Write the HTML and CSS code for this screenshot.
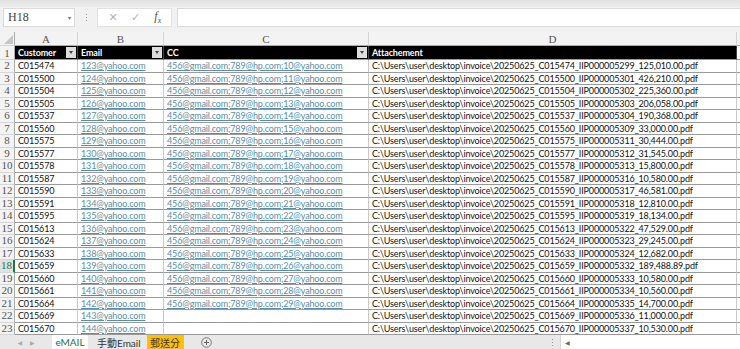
FILE: index.html
```html
<!DOCTYPE html>
<html lang="en">
<head>
    <meta charset="UTF-8">
    <meta name="viewport" content="width=device-width, initial-scale=1.0">
    <title>Invoice mailing list</title>
    <link rel="stylesheet" href="styles.css">
</head>
<body>
    <div class="top-edge"></div>

    <div class="formula-bar">
        <div class="name-box">
            <span>H18</span>
            <span class="caret">&#9662;</span>
        </div>
        <div class="grip"><i></i><i></i><i></i></div>
        <div class="fx-box">
            <span class="fx-btn">&#10005;</span>
            <span class="fx-btn">&#10003;</span>
            <span class="fx-btn fx">f<sub>x</sub></span>
        </div>
        <div class="formula-input"></div>
    </div>

    <div class="sheet">
        <div class="row col-heads">
            <div class="corner"><svg width="9" height="9" viewBox="0 0 9 9"><polygon points="9,0 9,9 0,9" fill="#c6c6c6"/></svg></div>
            <div class="c a">A</div>
            <div class="c b">B</div>
            <div class="c cc">C</div>
            <div class="c d">D</div>
            <div class="c e"></div>
        </div>

        <div class="row head">
            <div class="rn">1</div>
            <div class="c a">Customer<span class="filter"></span></div>
            <div class="c b">Email<span class="filter"></span></div>
            <div class="c cc">CC<span class="filter"></span></div>
            <div class="c d">Attachement</div>
            <div class="c e"></div>
        </div>

        <div class="row"><div class="rn">2</div><div class="c a">C015474</div><div class="c b"><a>123@yahoo.com</a></div><div class="c cc"><a>456@gmail.com;789@hp.com;10@yahoo.com</a></div><div class="c d">C:\Users\user\desktop\invoice\20250625_C015474_IIP000005299_125,010.00.pdf</div><div class="c e"></div></div>
        <div class="row"><div class="rn">3</div><div class="c a">C015500</div><div class="c b"><a>124@yahoo.com</a></div><div class="c cc"><a>456@gmail.com;789@hp.com;11@yahoo.com</a></div><div class="c d">C:\Users\user\desktop\invoice\20250625_C015500_IIP000005301_426,210.00.pdf</div><div class="c e"></div></div>
        <div class="row"><div class="rn">4</div><div class="c a">C015504</div><div class="c b"><a>125@yahoo.com</a></div><div class="c cc"><a>456@gmail.com;789@hp.com;12@yahoo.com</a></div><div class="c d">C:\Users\user\desktop\invoice\20250625_C015504_IIP000005302_225,360.00.pdf</div><div class="c e"></div></div>
        <div class="row"><div class="rn">5</div><div class="c a">C015505</div><div class="c b"><a>126@yahoo.com</a></div><div class="c cc"><a>456@gmail.com;789@hp.com;13@yahoo.com</a></div><div class="c d">C:\Users\user\desktop\invoice\20250625_C015505_IIP000005303_206,058.00.pdf</div><div class="c e"></div></div>
        <div class="row"><div class="rn">6</div><div class="c a">C015537</div><div class="c b"><a>127@yahoo.com</a></div><div class="c cc"><a>456@gmail.com;789@hp.com;14@yahoo.com</a></div><div class="c d">C:\Users\user\desktop\invoice\20250625_C015537_IIP000005304_190,368.00.pdf</div><div class="c e"></div></div>
        <div class="row"><div class="rn">7</div><div class="c a">C015560</div><div class="c b"><a>128@yahoo.com</a></div><div class="c cc"><a>456@gmail.com;789@hp.com;15@yahoo.com</a></div><div class="c d">C:\Users\user\desktop\invoice\20250625_C015560_IIP000005309_33,000.00.pdf</div><div class="c e"></div></div>
        <div class="row"><div class="rn">8</div><div class="c a">C015575</div><div class="c b"><a>129@yahoo.com</a></div><div class="c cc"><a>456@gmail.com;789@hp.com;16@yahoo.com</a></div><div class="c d">C:\Users\user\desktop\invoice\20250625_C015575_IIP000005311_30,444.00.pdf</div><div class="c e"></div></div>
        <div class="row"><div class="rn">9</div><div class="c a">C015577</div><div class="c b"><a>130@yahoo.com</a></div><div class="c cc"><a>456@gmail.com;789@hp.com;17@yahoo.com</a></div><div class="c d">C:\Users\user\desktop\invoice\20250625_C015577_IIP000005312_31,545.00.pdf</div><div class="c e"></div></div>
        <div class="row"><div class="rn">10</div><div class="c a">C015578</div><div class="c b"><a>131@yahoo.com</a></div><div class="c cc"><a>456@gmail.com;789@hp.com;18@yahoo.com</a></div><div class="c d">C:\Users\user\desktop\invoice\20250625_C015578_IIP000005313_15,800.00.pdf</div><div class="c e"></div></div>
        <div class="row"><div class="rn">11</div><div class="c a">C015587</div><div class="c b"><a>132@yahoo.com</a></div><div class="c cc"><a>456@gmail.com;789@hp.com;19@yahoo.com</a></div><div class="c d">C:\Users\user\desktop\invoice\20250625_C015587_IIP000005316_10,580.00.pdf</div><div class="c e"></div></div>
        <div class="row"><div class="rn">12</div><div class="c a">C015590</div><div class="c b"><a>133@yahoo.com</a></div><div class="c cc"><a>456@gmail.com;789@hp.com;20@yahoo.com</a></div><div class="c d">C:\Users\user\desktop\invoice\20250625_C015590_IIP000005317_46,581.00.pdf</div><div class="c e"></div></div>
        <div class="row"><div class="rn">13</div><div class="c a">C015591</div><div class="c b"><a>134@yahoo.com</a></div><div class="c cc"><a>456@gmail.com;789@hp.com;21@yahoo.com</a></div><div class="c d">C:\Users\user\desktop\invoice\20250625_C015591_IIP000005318_12,810.00.pdf</div><div class="c e"></div></div>
        <div class="row"><div class="rn">14</div><div class="c a">C015595</div><div class="c b"><a>135@yahoo.com</a></div><div class="c cc"><a>456@gmail.com;789@hp.com;22@yahoo.com</a></div><div class="c d">C:\Users\user\desktop\invoice\20250625_C015595_IIP000005319_18,134.00.pdf</div><div class="c e"></div></div>
        <div class="row"><div class="rn">15</div><div class="c a">C015613</div><div class="c b"><a>136@yahoo.com</a></div><div class="c cc"><a>456@gmail.com;789@hp.com;23@yahoo.com</a></div><div class="c d">C:\Users\user\desktop\invoice\20250625_C015613_IIP000005322_47,529.00.pdf</div><div class="c e"></div></div>
        <div class="row"><div class="rn">16</div><div class="c a">C015624</div><div class="c b"><a>137@yahoo.com</a></div><div class="c cc"><a>456@gmail.com;789@hp.com;24@yahoo.com</a></div><div class="c d">C:\Users\user\desktop\invoice\20250625_C015624_IIP000005323_29,245.00.pdf</div><div class="c e"></div></div>
        <div class="row"><div class="rn">17</div><div class="c a">C015633</div><div class="c b"><a>138@yahoo.com</a></div><div class="c cc"><a>456@gmail.com;789@hp.com;25@yahoo.com</a></div><div class="c d">C:\Users\user\desktop\invoice\20250625_C015633_IIP000005324_12,682.00.pdf</div><div class="c e"></div></div>
        <div class="row"><div class="rn selected">18</div><div class="c a">C015659</div><div class="c b"><a>139@yahoo.com</a></div><div class="c cc"><a>456@gmail.com;789@hp.com;26@yahoo.com</a></div><div class="c d">C:\Users\user\desktop\invoice\20250625_C015659_IIP000005332_189,488.89.pdf</div><div class="c e"></div></div>
        <div class="row"><div class="rn">19</div><div class="c a">C015660</div><div class="c b"><a>140@yahoo.com</a></div><div class="c cc"><a>456@gmail.com;789@hp.com;27@yahoo.com</a></div><div class="c d">C:\Users\user\desktop\invoice\20250625_C015660_IIP000005333_10,580.00.pdf</div><div class="c e"></div></div>
        <div class="row"><div class="rn">20</div><div class="c a">C015661</div><div class="c b"><a>141@yahoo.com</a></div><div class="c cc"><a>456@gmail.com;789@hp.com;28@yahoo.com</a></div><div class="c d">C:\Users\user\desktop\invoice\20250625_C015661_IIP000005334_10,560.00.pdf</div><div class="c e"></div></div>
        <div class="row"><div class="rn">21</div><div class="c a">C015664</div><div class="c b"><a>142@yahoo.com</a></div><div class="c cc"><a>456@gmail.com;789@hp.com;29@yahoo.com</a></div><div class="c d">C:\Users\user\desktop\invoice\20250625_C015664_IIP000005335_14,700.00.pdf</div><div class="c e"></div></div>
        <div class="row"><div class="rn">22</div><div class="c a">C015669</div><div class="c b"><a>143@yahoo.com</a></div><div class="c cc"></div><div class="c d">C:\Users\user\desktop\invoice\20250625_C015669_IIP000005336_11,000.00.pdf</div><div class="c e"></div></div>
        <div class="row"><div class="rn">23</div><div class="c a">C015670</div><div class="c b"><a>144@yahoo.com</a></div><div class="c cc"></div><div class="c d">C:\Users\user\desktop\invoice\20250625_C015670_IIP000005337_10,530.00.pdf</div><div class="c e"></div></div>
    </div>

    <div class="tab-bar">
        <div class="nav">
            <span>&#9664;</span>
            <span>&#9654;</span>
        </div>
        <div class="tab active">eMAIL</div>
        <div class="tab">手動Email</div>
        <div class="tab orange">郵送分</div>
        <div class="add">
            <svg width="11" height="11" viewBox="0 0 11 11"><circle cx="5.5" cy="5.5" r="4.8" fill="none" stroke="#777" stroke-width="1"/><path d="M5.5 3v5M3 5.5h5" stroke="#666" stroke-width="1"/></svg>
        </div>
        <div class="spacer"></div>
        <div class="grip small"><i></i><i></i><i></i></div>
        <div class="hscroll">
            <span class="arrow">&#9664;</span>
        </div>
    </div>
</body>
</html>
```

FILE: styles.css
```css
body { margin: 0; width: 740px; height: 349px; overflow: hidden; background: #fff; font-family: Lato, "Liberation Sans", sans-serif; }

.top-edge { height: 7px; background: linear-gradient(#e2e2e2, #ececec); }

.formula-bar { display: flex; align-items: center; background: #f1f1f1; padding: 0 0 0 3px; box-sizing: border-box; border-bottom: 4px solid #f1f1f1; height: 25px; }
.name-box { width: 72px; height: 19px; background: #fff; border: 1px solid #dadada; box-sizing: border-box; display: flex; align-items: center; justify-content: space-between; padding: 0 3px 0 4px; font-family: "Liberation Serif", serif; font-size: 12px; color: #444; }
.name-box .caret { font-family: "DejaVu Sans", sans-serif; font-size: 6px; color: #777; }
.grip { width: 22px; display: flex; flex-direction: column; align-items: center; gap: 2px; }
.grip i { width: 1px; height: 1px; background: #999; display: block; }
.fx-box { width: 75px; height: 19px; background: #fff; border: 1px solid #e2e2e2; box-sizing: border-box; display: flex; align-items: center; justify-content: space-around; padding: 0 2px 0 4px; }
.fx-btn { font-family: "DejaVu Sans", sans-serif; font-size: 11px; color: #b4b4b4; width: 20px; text-align: center; }
.fx-btn.fx { font-family: "Liberation Serif", serif; font-style: italic; font-size: 12px; color: #555; }
.fx-btn.fx sub { font-size: 8px; }
.formula-input { flex: 1; height: 19px; margin-left: 5px; background: #fff; border: 1px solid #dadada; border-right: none; box-sizing: border-box; }

.sheet { height: 303px; overflow: hidden; }
.row { display: flex; height: 12.5px; }
.row > div { box-sizing: border-box; flex: none; border-right: 1px solid #c9c9c9; border-bottom: 1px solid #9a9a9a; font-size: 9px; letter-spacing: -0.14px; line-height: 11.5px; white-space: nowrap; overflow: hidden; padding-left: 3px; color: #111; }

.rn, .corner { width: 15px; background: #f3f3f3; color: #555 !important; font-family: "Liberation Serif", serif; font-size: 11px !important; letter-spacing: 0 !important; text-align: center; padding-left: 0 !important; border-right-color: #ababab !important; border-bottom-color: #d6d6d6 !important; }
.rn.selected { color: #217346 !important; background: #e1e1e1; border-right: 2px solid #217346 !important; }
.a { width: 63px; }
.b { width: 86px; }
.cc { width: 205px; }
.d { width: 368px; }
.e { width: 20px; border-right: none !important; }

.col-heads { height: 14px; }
.col-heads > div { background: #f3f3f3; color: #555; font-family: "Liberation Serif", serif; font-size: 11px; letter-spacing: 0; line-height: 15px; text-align: center; padding-left: 0; border-right-color: #d4d4d4; border-bottom-color: #ababab; }
.corner { position: relative; }
.corner svg { position: absolute; right: 1px; bottom: 1px; }

.head { height: 14px; }
.head > div { line-height: 13px; }
.head .c { background: #000; color: #fff; font-weight: bold; position: relative; border-right-color: #444; }
.head .e { background: #fff; }
.head .rn { line-height: 14px; }
.filter { position: absolute; right: 1px; top: 1px; width: 10px; height: 11px; background: #dedede; }
.filter::after { content: ""; position: absolute; left: 3px; top: 4px; border-left: 2.5px solid transparent; border-right: 2.5px solid transparent; border-top: 3px solid #444; }

.row a { color: #5b8ea6; text-decoration: underline; }

.tab-bar { height: 14px; display: flex; align-items: stretch; background: #e8e8e8; font-size: 10px; }
.nav { width: 52px; display: flex; justify-content: center; gap: 8px; align-items: center; font-size: 6px; color: #aaa; font-family: "DejaVu Sans", sans-serif; }
.tab { padding: 0 4px; display: flex; align-items: center; color: #333; font-family: Lato, "Noto Sans CJK TC", sans-serif; }
.tab.active { background: #fff; color: #217346; width: 36px; justify-content: center; padding: 0; margin-right: 5px; }
.tab.orange { background: #ffc000; margin-left: 2px; width: 37px; justify-content: center; padding: 0; }
.add { display: flex; align-items: center; margin-left: 17px; }
.spacer { flex: 1; }
.grip.small { width: 16px; justify-content: center; }
.hscroll { width: 179px; background: #fff; display: flex; align-items: center; border-left: 1px solid #d6d6d6; }
.hscroll .arrow { font-family: "DejaVu Sans", sans-serif; font-size: 6px; color: #666; padding: 0 4px; }
```
